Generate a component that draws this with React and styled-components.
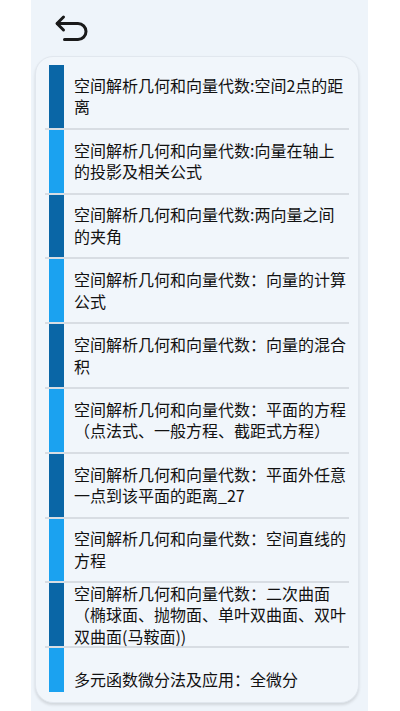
import React from 'react';
import styled, { createGlobalStyle } from 'styled-components';

const GlobalStyle = createGlobalStyle`
  html, body {
    margin: 0;
    padding: 0;
    background: #ffffff;
  }
  body {
    font-family: "Noto Sans CJK SC", "Noto Sans", sans-serif;
  }
`;

// Styled Components
const Panel = styled.div`
  width: 337px;
  height: 711px;
  margin-left: 31px;
  background: #eef4fa;
  display: flex;
  flex-direction: column;
  box-sizing: border-box;
  padding-bottom: 8px;
`;

const Header = styled.div`
  height: 56px;
  display: flex;
  align-items: center;
  padding-left: 23px;
  flex-shrink: 0;
`;

const BackButton = styled.button`
  border: none;
  background: none;
  padding: 0;
  width: 36px;
  height: 30px;
  cursor: pointer;
  display: flex;
`;

const Card = styled.div`
  flex: 1;
  min-height: 0;
  margin: 0 9px 0 4px;
  background: #f1f6fb;
  border-radius: 18px;
  border: 1px solid #e1e7ee;
  box-shadow: 0 2px 3px rgba(0, 0, 0, 0.12);
  padding: 8px 0 10px;
  box-sizing: border-box;
  display: flex;
  flex-direction: column;
`;

const List = styled.div`
  flex: 1;
  min-height: 0;
  overflow: hidden;
  margin: 0 9px;
`;

const Row = styled.div`
  height: 62.8px;
  display: flex;
  align-items: center;
  padding-left: 4px;
  border-bottom: 2px solid #d8dde3;
`;

const Bar = styled.div`
  width: 15px;
  align-self: stretch;
  flex-shrink: 0;
  background: ${p => (p.$dark ? '#0a66a6' : '#1ba2f0')};
`;

const Title = styled.div`
  width: 276px;
  margin-left: 10px;
  font-size: 16px;
  line-height: 21.5px;
  color: #111111;
`;

const items = [
  '空间解析几何和向量代数:空间2点的距离',
  '空间解析几何和向量代数:向量在轴上的投影及相关公式',
  '空间解析几何和向量代数:两向量之间的夹角',
  '空间解析几何和向量代数：向量的计算公式',
  '空间解析几何和向量代数：向量的混合积',
  '空间解析几何和向量代数：平面的方程（点法式、一般方程、截距式方程）',
  '空间解析几何和向量代数：平面外任意一点到该平面的距离_27',
  '空间解析几何和向量代数：空间直线的方程',
  '空间解析几何和向量代数：二次曲面（椭球面、抛物面、单叶双曲面、双叶双曲面(马鞍面))',
  '多元函数微分法及应用：全微分',
];

const BackIcon = () => (
  <svg width="36" height="30" viewBox="0 0 36 30" fill="none" stroke="#1a1a1a"
    strokeWidth="3" strokeLinecap="round" strokeLinejoin="round">
    <path d="M9.5 4 3 10.5 9.5 17" />
    <path d="M3.5 10.5H24a8 8 0 0 1 0 16H10.5" />
  </svg>
);

const App = () => {
  return (
    <>
      <GlobalStyle />
      <Panel>
        <Header>
          <BackButton aria-label="back">
            <BackIcon />
          </BackButton>
        </Header>
        <Card>
          <List>
            {items.map((text, index) => (
              <Row key={index}>
                <Bar $dark={index % 2 === 0} />
                <Title>{text}</Title>
              </Row>
            ))}
          </List>
        </Card>
      </Panel>
    </>
  );
};

export default App;
